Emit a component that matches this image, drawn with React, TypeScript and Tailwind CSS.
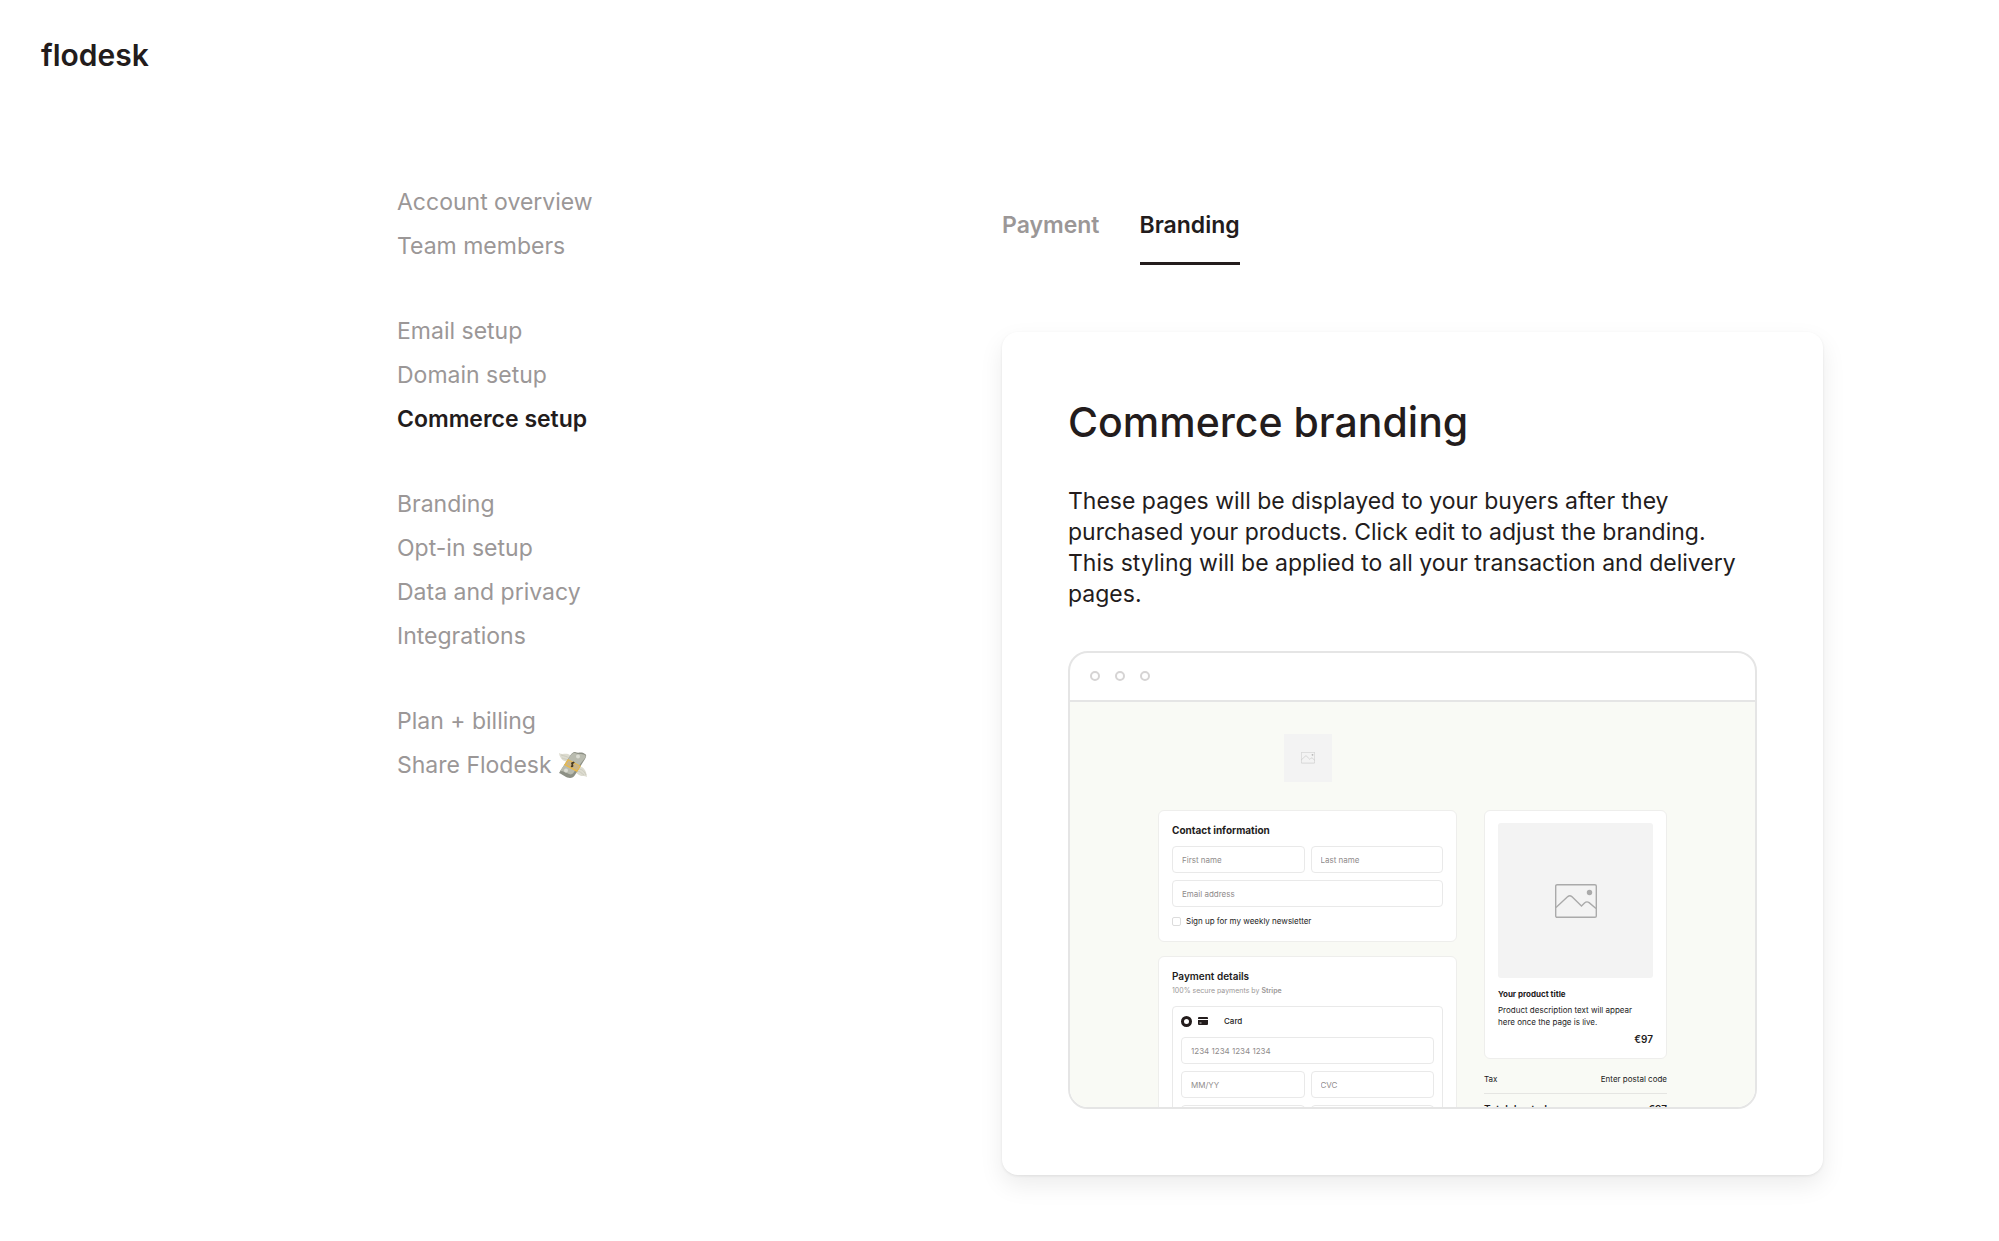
import { useState } from 'react';

const navGroups = [
  ['Account overview', 'Team members'],
  ['Email setup', 'Domain setup', 'Commerce setup'],
  ['Branding', 'Opt-in setup', 'Data and privacy', 'Integrations'],
  ['Plan + billing', 'Share Flodesk'],
];

const tabs = ['Payment', 'Branding'];

function MoneyWings() {
  return (
    <svg viewBox="0 0 30 28" className="h-7 w-[30px]" aria-hidden="true">
      <path d="M11 11C7 11 2 9 1 2c3 2 6 0 9 1 3 1 4 3 4 5z" fill="#dddcd0" />
      <path d="M3 4c3 1 6 1 9 4M4 7c2 1 4 1 7 2" stroke="#c8c7ba" strokeWidth="0.8" fill="none" />
      <path d="M19 17c3-3 9-1 10 9-3-2-5 0-8-2-2-1-4-3-4-4z" fill="#dddcd0" />
      <path d="M20 18c3 0 6 1 8 6M19 20c3 0 4 2 7 4" stroke="#c8c7ba" strokeWidth="0.8" fill="none" />
      <path d="M1 22 12 5c1-2 3-4 5-4 4 2 6-1 10 2 2 1 1 3 0 5L17 24c-1 2-3 3-5 3-4 0-6-3-11-5z" fill="#8d9085" />
      <path d="M2 20 13 4c1-2 3-2 4-2 4 2 6 0 10 2 1 1 1 2 0 3L16 21c-1 2-3 3-5 2-3-1-5-3-9-3z" fill="#b9bbaf" />
      <circle cx="20" cy="5.500" r="2" fill="#dbdcd3" />
      <circle cx="8" cy="19.500" r="2" fill="#dbdcd3" />
      <path d="m10 8 13 7-4 6-13-7z" fill="#e9b949" />
      <path d="m10.500 9.500 11 5.800-2.500 3.900-11-5.800z" fill="#c8b48a" />
      <path d="M16.500 11.500c-2-.8-3.500.5-2.300 2 1 1.200 1 2.500-1.200 2M15.800 10.800l-2.600 5.200" stroke="#4a3a20" strokeWidth="1.200" fill="none" />
    </svg>
  );
}

function ImageIcon({ className }: { className: string }) {
  return (
    <svg viewBox="0 0 42 34" fill="none" stroke="currentColor" strokeWidth="1.4" className={className} aria-hidden="true">
      <rect x="0.7" y="0.7" width="40.6" height="32.6" rx="1.4" />
      <path d="M1 23.500 12.800 12.600q2-1.700 4 0L26.500 22l3-3q2.200-2 4.600-.4L41 24.500" />
      <circle cx="34.500" cy="8.500" r="2.700" fill="currentColor" stroke="none" />
    </svg>
  );
}

function Field({ label }: { label: string }) {
  return (
    <input
      type="text"
      aria-label={label}
      placeholder={label}
      className="h-[27px] w-full min-w-0 rounded-[4px] border border-[#e9e9e9] bg-white px-[9px] text-[8px] text-[#231c1c] placeholder:text-[#8f8b8b]"
    />
  );
}

function CheckoutPreview() {
  return (
    <div className="flex h-[405px] gap-[27px] overflow-hidden bg-[#f9faf5] px-[88px] pt-8 text-[8px] leading-3">
      <div className="flex flex-1 flex-col gap-[14px]">
        <div className="mx-auto mb-[14px] flex size-12 shrink-0 items-center justify-center bg-[#f3f3f3]">
          <ImageIcon className="w-[14px] text-[#b5b5b5]" />
        </div>

        <div className="rounded-md border border-[#eeeeec] bg-white px-[13px] pt-3 pb-[14px]">
          <h3 className="text-[10px] leading-[15px] font-bold">Contact information</h3>
          <div className="mt-2 grid grid-cols-2 gap-x-[6px] gap-y-[7px]">
            <Field label="First name" />
            <Field label="Last name" />
            <div className="col-span-2">
              <Field label="Email address" />
            </div>
          </div>
          <label className="mt-2 flex items-center gap-[5px]">
            <input type="checkbox" className="size-[9px] appearance-none rounded-[2px] border border-[#dcdcdc] bg-white" />
            Sign up for my weekly newsletter
          </label>
        </div>

        <div className="rounded-md border border-[#eeeeec] bg-white px-[13px] py-3">
          <h3 className="text-[10px] leading-[15px] font-semibold">Payment details</h3>
          <p className="mt-px text-[7px] text-[#9b9797]">
            100% secure payments by <span className="font-semibold">Stripe</span>
          </p>
          <div className="mt-[9px] rounded-[4px] border border-[#e9e9e9] px-2 pt-2">
            <label className="flex items-center font-medium">
              <input type="radio" defaultChecked className="size-[11px] appearance-none rounded-full border-[3px] border-[#231c1c] bg-white" />
              <svg viewBox="0 0 10 8" className="ml-[6px] h-2 w-[10px]" aria-hidden="true">
                <path d="M1 0h8q1 0 1 1v1H0V1q0-1 1-1zM0 3h10v4q0 1-1 1H1Q0 8 0 7z" fill="#231c1c" />
                <path d="M1.500 6h2" stroke="#fff" strokeWidth="0.8" />
              </svg>
              <span className="ml-4">Card</span>
            </label>
            <div className="mt-[10px] grid grid-cols-2 gap-x-[6px] gap-y-[7px]">
              <div className="col-span-2">
                <Field label="1234 1234 1234 1234" />
              </div>
              <Field label="MM/YY" />
              <Field label="CVC" />
              <Field label="Country" />
              <Field label="Postal code" />
            </div>
          </div>
        </div>
      </div>

      <div className="mt-[76px] w-[183px]">
        <div className="rounded-md border border-[#eeeeec] bg-white px-[13px] pt-3 pb-[11px]">
          <div className="flex aspect-square items-center justify-center rounded-[3px] bg-[#f3f3f3]">
            <ImageIcon className="w-[42px] text-[#aaaaaa]" />
          </div>
          <h3 className="mt-[10px] font-bold">Your product title</h3>
          <p className="mt-1 pr-3">Product description text will appear here once the page is live.</p>
          <p className="mt-[3px] text-right text-[10px] leading-4 font-semibold">€97</p>
        </div>
        <div className="mt-[14px] flex justify-between border-b border-[#e5e5e2] pb-2">
          <span>Tax</span>
          <span>Enter postal code</span>
        </div>
        <div className="mt-[9px] flex justify-between text-[10px] font-semibold">
          <span>Total due today</span>
          <span>€97</span>
        </div>
      </div>
    </div>
  );
}

export default function App() {
  const [page, setPage] = useState('Commerce setup');
  const [tab, setTab] = useState('Branding');

  return (
    <div className="min-h-screen bg-white font-['Inter',sans-serif] text-[#231c1c]">
      <header className="flex h-[110px] items-center px-[41px]">
        <a href="#" className="text-[30px] font-semibold">flodesk</a>
      </header>

      <div className="flex pr-[176px] pb-16 pl-[397px]">
        <nav className="mt-[70px] flex w-[605px] shrink-0 flex-col gap-[41px]">
          {navGroups.map((group) => (
            <ul key={group[0]}>
              {group.map((item) => (
                <li key={item}>
                  <a
                    href="#"
                    onClick={() => setPage(item)}
                    className={`flex h-11 items-center gap-[6px] text-[23px] ${page === item ? 'font-semibold' : 'text-[#9b9797]'}`}
                  >
                    {item}
                    {item === 'Share Flodesk' && <MoneyWings />}
                  </a>
                </li>
              ))}
            </ul>
          ))}
        </nav>

        <main className="min-w-0 flex-1 pt-[99px]">
          <div className="flex gap-10">
            {tabs.map((t) => (
              <button
                key={t}
                onClick={() => setTab(t)}
                className={`h-14 border-b-[3px] pb-[21px] text-[23px] leading-[30px] font-semibold ${tab === t ? 'border-[#231c1c]' : 'border-transparent text-[#9b9797]'}`}
              >
                {t}
              </button>
            ))}
          </div>

          <section className="mt-[67px] rounded-2xl p-[66px] shadow-[0_10px_24px_rgba(0,0,0,0.08),0_1px_3px_rgba(0,0,0,0.08)]">
            <h1 className="text-[41px] leading-[48px] font-medium">Commerce branding</h1>
            <p className="mt-10 text-[23px] leading-[31px]">
              These pages will be displayed to your buyers after they purchased your products. Click edit to adjust the
              branding. This styling will be applied to all your transaction and delivery pages.
            </p>

            <div className="mt-[41px] overflow-hidden rounded-[20px] border-2 border-[#e5e5e5]">
              <div className="flex h-[49px] items-center gap-[15px] border-b-2 border-[#e5e5e5] px-5 pb-px">
                <span className="size-[10px] rounded-full border-2 border-[#d6d4d4]" />
                <span className="size-[10px] rounded-full border-2 border-[#d6d4d4]" />
                <span className="size-[10px] rounded-full border-2 border-[#d6d4d4]" />
              </div>
              <CheckoutPreview />
            </div>
          </section>
        </main>
      </div>
    </div>
  );
}
